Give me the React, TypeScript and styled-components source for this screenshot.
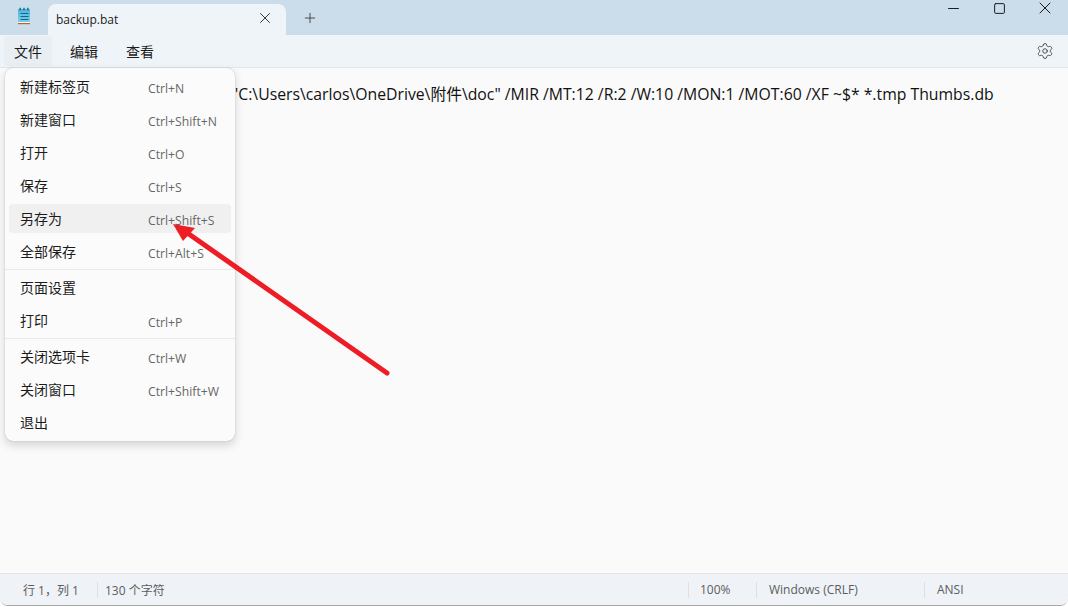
import React from 'react'
import styled, { createGlobalStyle } from 'styled-components'
import { Settings, X, Plus, Minus, Square } from 'lucide-react'

const GlobalStyle = createGlobalStyle`
  html, body {
    margin: 0;
    padding: 0;
    background: #ffffff;
  }
  body {
    font-family: "Open Sans", "Noto Sans", "Noto Sans CJK SC", sans-serif;
  }
`

const Window = styled.div`
  position: relative;
  width: 1068px;
  height: 606px;
  display: flex;
  flex-direction: column;
  overflow: hidden;
  border-radius: 0 0 8px 8px;
  border-bottom: 1px solid #a9a9a9;
  box-sizing: border-box;
  background: #fafafa;
`

const TitleBar = styled.div`
  height: 35px;
  flex-shrink: 0;
  display: flex;
  background: #cbdcea;
`

const AppIcon = styled.div`
  width: 48px;
  display: flex;
  align-items: center;
  justify-content: center;
  padding-bottom: 3px;
  box-sizing: border-box;
`

const Tab = styled.div`
  width: 238px;
  margin-top: 4px;
  padding: 0 8px 0 8px;
  box-sizing: border-box;
  display: flex;
  align-items: center;
  justify-content: space-between;
  background: #eff4f9;
  border-radius: 8px 8px 0 0;
  color: #1b1b1b;
  font-size: 12px;
`

const TabClose = styled.span`
  display: flex;
  margin-right: 4px;
  margin-bottom: 3px;
  color: #333;
`

const NewTab = styled.span`
  width: 48px;
  display: flex;
  align-items: center;
  justify-content: center;
  color: #444;
`

const WindowControls = styled.div`
  margin-left: auto;
  display: flex;
  align-items: flex-start;
  color: #1a1a1a;
`

const ControlButton = styled.span`
  width: 46px;
  height: 16px;
  display: flex;
  align-items: center;
  justify-content: center;
`

const MenuBar = styled.div`
  height: 33px;
  flex-shrink: 0;
  display: flex;
  align-items: center;
  padding: 0 4px;
  box-sizing: border-box;
  background: #eff4f9;
  border-bottom: 1px solid #e5e5e5;
  position: relative;
`

const MenuTitle = styled.div<{ $active?: boolean }>`
  width: 48px;
  height: 30px;
  margin-right: 8px;
  display: flex;
  align-items: center;
  justify-content: center;
  border-radius: 4px;
  font-size: 14px;
  color: #1b1b1b;
  background: ${({ $active }) => ($active ? '#e9eef3' : 'transparent')};
`

const SettingsButton = styled.span`
  margin-left: auto;
  margin-right: 10px;
  display: flex;
  color: #333;
`

const Editor = styled.div`
  flex: 1;
  padding: 16px 0 0 232px;
  font-size: 15.77px;
  line-height: 20px;
  white-space: pre;
  color: #111;
  background: #fafafa;
  overflow: hidden;
`

const StatusBar = styled.div`
  height: 32px;
  flex-shrink: 0;
  display: flex;
  align-items: center;
  box-sizing: border-box;
  background: #eff3f8;
  border-top: 1px solid #e5e5e5;
  font-size: 12px;
  color: #5c5c5c;
`

const StatusCell = styled.div<{ $width: number; $pad: number; $divider?: boolean }>`
  width: ${({ $width }) => $width}px;
  height: 16px;
  padding-left: ${({ $pad }) => $pad}px;
  box-sizing: border-box;
  display: flex;
  align-items: center;
  border-left: ${({ $divider }) => ($divider ? '1px solid #dcdfe3' : 'none')};
`

const Menu = styled.div`
  position: absolute;
  left: 5px;
  top: 68px;
  width: 230px;
  height: 373px;
  padding-top: 2px;
  box-sizing: border-box;
  display: flex;
  flex-direction: column;
  background: #fbfbfb;
  border-radius: 8px;
  box-shadow: 0 0 1px rgba(0, 0, 0, 0.35), 0 4px 10px rgba(0, 0, 0, 0.16);
`

const MenuItem = styled.div<{ $hover?: boolean }>`
  height: 29px;
  flex-shrink: 0;
  margin: 2px 4px;
  padding: 0 11px 2px;
  box-sizing: border-box;
  display: flex;
  align-items: center;
  border-radius: 4px;
  background: ${({ $hover }) => ($hover ? '#f0f0f0' : 'transparent')};
`

const ItemLabel = styled.span`
  width: 128px;
  font-size: 14px;
  color: #1b1b1b;
`

const ItemShortcut = styled.span`
  font-size: 12.2px;
  color: #666;
  margin-top: 5px;
`

const MenuDivider = styled.div`
  height: 1px;
  flex-shrink: 0;
  margin: 1px 0;
  background: #e8e8e8;
`

const Arrow = styled.svg`
  position: absolute;
  left: 0;
  top: 0;
  pointer-events: none;
`

const NotepadIcon = () => (
  <svg width="18" height="18" viewBox="0 0 18 18">
    <defs>
      <linearGradient id="pad" x1="0" y1="0" x2="0" y2="1">
        <stop offset="0" stopColor="#4fb6dc" />
        <stop offset="1" stopColor="#74d0ee" />
      </linearGradient>
    </defs>
    <rect x="3" y="2" width="12" height="13" fill="url(#pad)" />
    <rect x="3" y="15" width="12" height="1" fill="#f4f4f4" />
    <rect x="3" y="16" width="12" height="1.2" fill="#c2602a" />
    <g fill="#1d5f82">
      <rect x="4.5" y="0.8" width="1.4" height="2.6" />
      <rect x="8.3" y="0.8" width="1.4" height="2.6" />
      <rect x="12.1" y="0.8" width="1.4" height="2.6" />
      <rect x="5.5" y="6" width="8" height="1" />
      <rect x="5.5" y="9" width="8" height="1" />
      <rect x="5.5" y="12" width="8" height="1" />
    </g>
  </svg>
)

type Entry = { label: string; shortcut?: string; hover?: boolean }

const menuGroups: Entry[][] = [
  [
    { label: '新建标签页', shortcut: 'Ctrl+N' },
    { label: '新建窗口', shortcut: 'Ctrl+Shift+N' },
    { label: '打开', shortcut: 'Ctrl+O' },
    { label: '保存', shortcut: 'Ctrl+S' },
    { label: '另存为', shortcut: 'Ctrl+Shift+S', hover: true },
    { label: '全部保存', shortcut: 'Ctrl+Alt+S' },
  ],
  [{ label: '页面设置' }, { label: '打印', shortcut: 'Ctrl+P' }],
  [
    { label: '关闭选项卡', shortcut: 'Ctrl+W' },
    { label: '关闭窗口', shortcut: 'Ctrl+Shift+W' },
    { label: '退出' },
  ],
]

const App = () => (
  <>
    <GlobalStyle />
    <Window>
      <TitleBar>
        <AppIcon>
          <NotepadIcon />
        </AppIcon>
        <Tab>
          <span>backup.bat</span>
          <TabClose>
            <X size={18} strokeWidth={1.3} />
          </TabClose>
        </Tab>
        <NewTab>
          <Plus size={16} strokeWidth={1.4} />
        </NewTab>
        <WindowControls>
          <ControlButton>
            <Minus size={17} strokeWidth={1.4} />
          </ControlButton>
          <ControlButton>
            <Square size={13} strokeWidth={1.8} />
          </ControlButton>
          <ControlButton>
            <X size={20} strokeWidth={1.2} />
          </ControlButton>
        </WindowControls>
      </TitleBar>
      <MenuBar>
        <MenuTitle $active>文件</MenuTitle>
        <MenuTitle>编辑</MenuTitle>
        <MenuTitle>查看</MenuTitle>
        <SettingsButton>
          <Settings size={18} strokeWidth={1.1} />
        </SettingsButton>
      </MenuBar>
      <Editor>{'"C:\\Users\\carlos\\OneDrive\\附件\\doc" /MIR /MT:12 /R:2 /W:10 /MON:1 /MOT:60 /XF ~$* *.tmp Thumbs.db'}</Editor>
      <StatusBar>
        <StatusCell $width={97} $pad={23}>行 1，列 1</StatusCell>
        <StatusCell $width={591} $pad={7} $divider>130 个字符</StatusCell>
        <StatusCell $width={68} $pad={11} $divider>100%</StatusCell>
        <StatusCell $width={168} $pad={12} $divider>Windows (CRLF)</StatusCell>
        <StatusCell $width={144} $pad={12} $divider>ANSI</StatusCell>
      </StatusBar>
      <Menu>
        {menuGroups.map((group, i) => (
          <React.Fragment key={i}>
            {i > 0 && <MenuDivider />}
            {group.map((entry) => (
              <MenuItem key={entry.label} $hover={entry.hover}>
                <ItemLabel>{entry.label}</ItemLabel>
                {entry.shortcut && <ItemShortcut>{entry.shortcut}</ItemShortcut>}
              </MenuItem>
            ))}
          </React.Fragment>
        ))}
      </Menu>
      <Arrow width="400" height="380" viewBox="0 0 400 380">
        <line x1="387" y1="373" x2="186" y2="232" stroke="#ee1c25" strokeWidth="5" strokeLinecap="round" />
        <polygon points="173,224 195,228 183,241" fill="#ee1c25" />
      </Arrow>
    </Window>
  </>
)

export default App
